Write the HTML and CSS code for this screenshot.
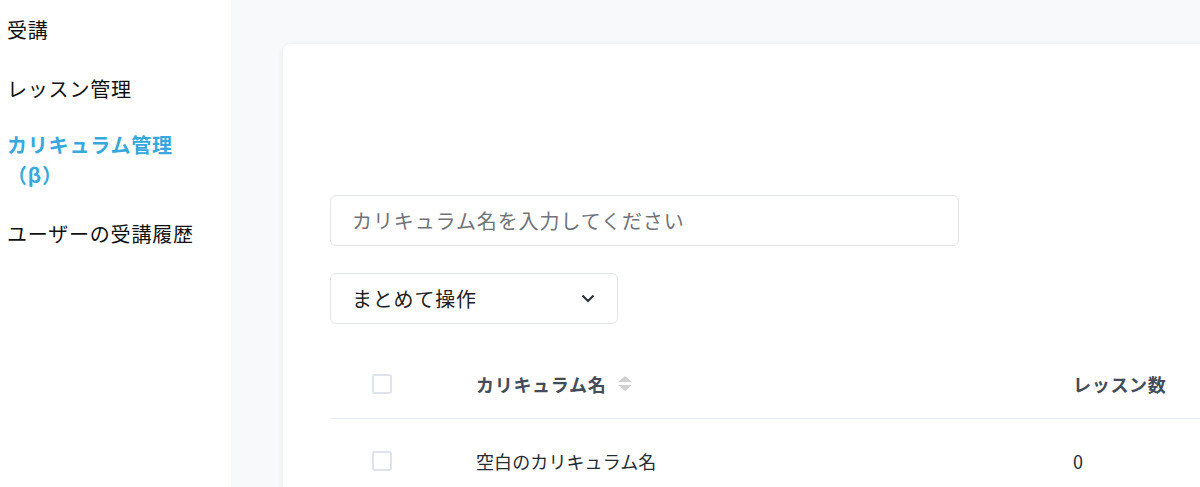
FILE: index.html
```html
<!DOCTYPE html>
<html lang="ja">
<head>
<meta charset="utf-8">
<link rel="stylesheet" href="styles.css">
</head>
<body>
<div class="app">
  <aside class="sidebar">
    <nav class="nav">
      <a class="nav-item">受講</a>
      <a class="nav-item">レッスン管理</a>
      <a class="nav-item active">カリキュラム管理<br>（β）</a>
      <a class="nav-item">ユーザーの受講履歴</a>
    </nav>
  </aside>
  <main class="content">
    <section class="card">
      <div class="search">
        <span class="placeholder">カリキュラム名を入力してください</span>
      </div>
      <div class="bulk">
        <span>まとめて操作</span>
        <svg class="chev" width="14" height="9" viewBox="0 0 14 9"><path d="M1.5 1.5 L7 7 L12.5 1.5" fill="none" stroke="#2a2f38" stroke-width="2"/></svg>
      </div>
      <div class="table">
        <div class="row head">
          <div class="cell cb"><span class="checkbox"></span></div>
          <div class="cell name">カリキュラム名
            <span class="sort"><span class="up"></span><span class="down"></span></span>
          </div>
          <div class="cell num">レッスン数</div>
        </div>
        <div class="row body">
          <div class="cell cb"><span class="checkbox"></span></div>
          <div class="cell name">空白のカリキュラム名</div>
          <div class="cell num">0</div>
        </div>
      </div>
    </section>
  </main>
</div>
</body>
</html>
```

FILE: styles.css
```css
* { box-sizing: border-box; }
html, body { margin: 0; padding: 0; }
body {
  font-family: "Noto Sans CJK JP", "Noto Sans", sans-serif;
  color: #1a1a1a;
  width: 1200px;
  height: 487px;
  overflow: hidden;
}
.app { display: flex; height: 487px; }
.sidebar { width: 231px; flex: none; background: #fff; }
.nav { display: flex; flex-direction: column; }
.nav-item {
  display: block;
  padding: 14.5px 7px;
  font-size: 20px;
  line-height: 30px;
  color: #111;
  letter-spacing: 0.8px;
}
.nav-item.active {
  color: #36a8de;
  font-weight: 700;
  padding: 11.5px 7px 15px;
}
.content {
  flex: 1;
  background: #f8f9fb;
  padding: 44px 0 0 52px;
  overflow: hidden;
}
.card {
  width: 1100px;
  height: 600px;
  background: #fff;
  border-radius: 8px 0 0 0;
  box-shadow: 0 1px 6px rgba(30, 40, 70, 0.08);
  padding: 151px 0 0 47px;
}
.search {
  width: 629px;
  height: 51px;
  border: 1px solid #e1e5ee;
  border-radius: 6px;
  display: flex;
  align-items: center;
  padding-left: 21px;
}
.placeholder { font-size: 20px; color: #6f737a; letter-spacing: 0.9px; }
.bulk {
  margin-top: 27px;
  width: 288px;
  height: 51px;
  border: 1px solid #e1e5ee;
  border-radius: 6px;
  display: flex;
  align-items: center;
  justify-content: space-between;
  padding: 0 22px 0 21px;
  font-size: 20px;
  color: #222;
  letter-spacing: 0.8px;
}
.chev { display: block; }
.table { margin-top: 25px; width: 900px; }
.row { display: grid; grid-template-columns: 146px 597px 1fr; align-items: center; }
.row.head { height: 70px; border-bottom: 1px solid #e6ecf3; }
.row.body { height: 84px; }
.cell.cb { padding-left: 42px; display: flex; align-items: center; }
.checkbox {
  display: block;
  width: 20px; height: 20px;
  border: 2px solid #dfe4ec;
  border-radius: 3px;
  background: #fff;
}
.head .cell.name, .head .cell.num {
  font-size: 18px;
  font-weight: 700;
  color: #444c59;
  letter-spacing: 0.7px;
}
.head .cell.name { display: flex; align-items: center; gap: 12px; }
.sort { display: flex; flex-direction: column; gap: 3px; }
.sort .up { width: 0; height: 0; border-left: 7px solid transparent; border-right: 7px solid transparent; border-bottom: 6px solid #d0d0d0; }
.sort .down { width: 0; height: 0; border-left: 7px solid transparent; border-right: 7px solid transparent; border-top: 6px solid #d0d0d0; }
.body .cell.name, .body .cell.num { font-size: 18px; color: #262b33; letter-spacing: 0.1px; }
```
